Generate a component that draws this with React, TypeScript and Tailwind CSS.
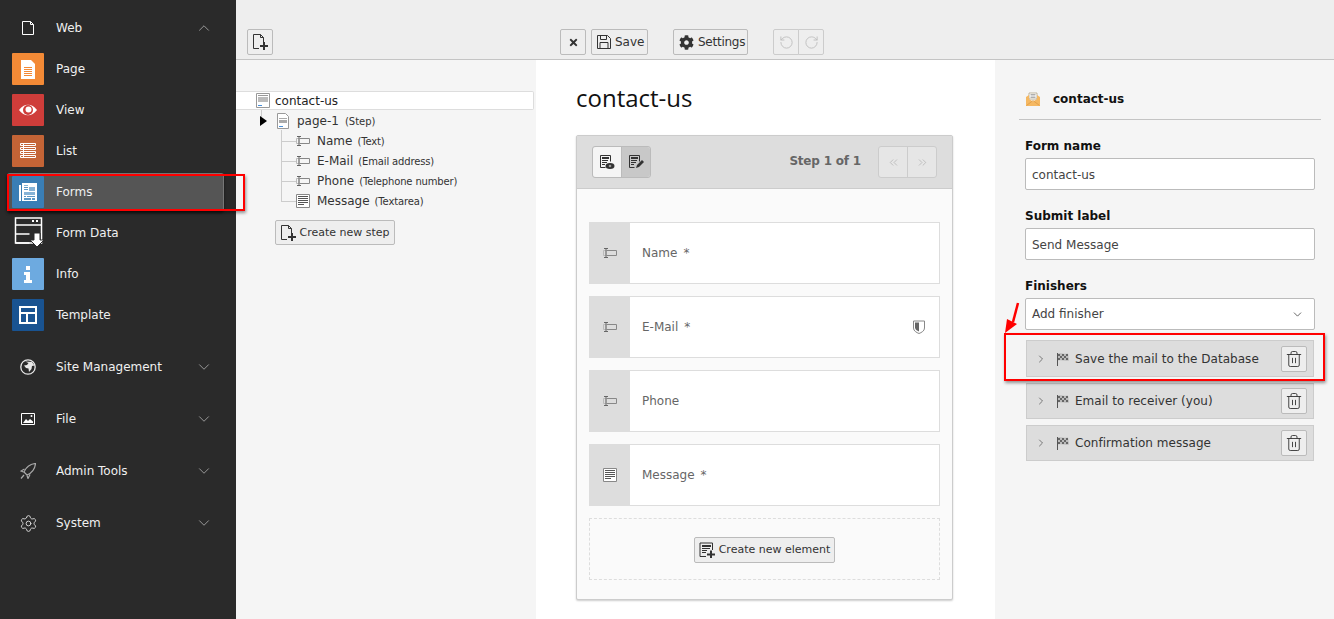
import { ChevronDown, ChevronRight, ChevronUp, ChevronsLeft, ChevronsRight, RotateCcw, RotateCw, Settings, Trash2 } from "lucide-react";
import { FaCog, FaTimes } from "react-icons/fa";
import type { ReactNode } from "react";

const verdana = "font-['DejaVu_Sans',sans-serif]";

function PageIcon() {
  return (
    <svg width="16" height="16" viewBox="0 0 16 16">
      <path d="M2.5 1.5h8l3 3v10h-11z" fill="none" stroke="#fff" />
      <path d="M10.5 1.5v3h3" fill="none" stroke="#fff" />
    </svg>
  );
}

function ModuleIcon({ name }: { name: string }) {
  if (name === "page") {
    return (
      <svg width="32" height="32" viewBox="0 0 32 32">
        <rect width="32" height="32" rx="1" fill="#f38a36" />
        <path d="M9 7h10l4 4v15H9z" fill="#fff" />
        <path d="M12 14.5h8M12 16.5h8M12 18.5h8M12 20.5h8M12 22.5h8" stroke="#f38a36" />
      </svg>
    );
  }
  if (name === "view") {
    return (
      <svg width="32" height="32" viewBox="0 0 32 32">
        <rect width="32" height="32" rx="1" fill="#cf3d3a" />
        <path d="M7 16c5-7 13-7 18 0-5 7-13 7-18 0z" fill="#fff" />
        <circle cx="16" cy="16" r="5" fill="#cf3d3a" />
        <circle cx="16.5" cy="15.5" r="3" fill="#fff" />
      </svg>
    );
  }
  if (name === "list") {
    return (
      <svg width="32" height="32" viewBox="0 0 32 32">
        <rect width="32" height="32" rx="1" fill="#c46436" />
        <path d="M8.5 8.5h15v2h-15zM8.5 12.5h15v2h-15zM8.5 16.5h15v2h-15zM8.5 20.5h15v2h-15z" fill="#c46436" stroke="#fff" />
        <path d="M11.5 9v13" stroke="#fff" />
      </svg>
    );
  }
  if (name === "forms") {
    return (
      <svg width="32" height="32" viewBox="0 0 32 32">
        <rect width="32" height="32" rx="1" fill="#3a7eb5" />
        <path d="M7 9h2v16H7z" fill="#fff" />
        <path d="M10 7h15v18H10z" fill="#fff" />
        <path d="M12 9h4v1h-4zM17 11h6v4h-6zM12 16h11v3H12z" fill="#86b3d6" />
        <path d="M12 11h4v1h-4zM12 13h4v1h-4zM12 20h2v1h-2zM15 20h8v1h-8zM12 22h7v2h-7zM20 22h3v2h-3z" fill="#5b97c4" />
      </svg>
    );
  }
  if (name === "formdata") {
    return (
      <svg width="32" height="32" viewBox="0 0 32 32">
        <path d="M3.5 1h26v25h-26z" fill="none" stroke="#fff" strokeWidth="1.5" />
        <path d="M3.5 8h26M3.5 17h14M3.5 26h14" stroke="#fff" strokeWidth="1.5" />
        <path d="M24 3h2v2h-2zM20 3h2v2h-2z" fill="#fff" />
        <path d="M22 16h6v7h4l-7 7-7-7h4z" fill="#fff" stroke="#2a2a2a" />
      </svg>
    );
  }
  if (name === "info") {
    return (
      <svg width="32" height="32" viewBox="0 0 32 32">
        <rect width="32" height="32" rx="1" fill="#6daae0" />
        <path d="M14 8h4v4h-4zM12 14h6v8h2v3h-8v-3h2v-5h-2z" fill="#fff" />
      </svg>
    );
  }
  return (
    <svg width="32" height="32" viewBox="0 0 32 32">
      <rect width="32" height="32" rx="1" fill="#195391" />
      <path d="M7 7h18v18H7z" fill="#fff" />
      <path d="M9 9h14v4H9zM9 15h5v8H9zM16 15h7v8h-7z" fill="#195391" />
    </svg>
  );
}

function GroupIcon({ name }: { name: string }) {
  if (name === "site") {
    return (
      <svg width="16" height="16" viewBox="0 0 16 16">
        <circle cx="8" cy="8" r="7.2" fill="none" stroke="#e8e8e8" strokeWidth="1.3" />
        <path d="M5 2.5 8.5 4 7 6 4 6.5 6 9l2.5.5L9 13l2.5-3 .5-3 2.5-.5L12 3z" fill="#e8e8e8" />
      </svg>
    );
  }
  if (name === "file") {
    return (
      <svg width="16" height="16" viewBox="0 0 16 16">
        <path d="M1.5 2.5h13v11h-13z" fill="none" stroke="#fff" />
        <path d="M3 12l3-4 2 2 2-2 3 2.5V12z" fill="#fff" />
        <circle cx="11.5" cy="5" r="1" fill="#fff" />
      </svg>
    );
  }
  if (name === "admin") {
    return (
      <svg width="16" height="16" viewBox="0 0 16 16">
        <path d="M15.5.5C10 1 6 4.5 4 9l3 3c4.5-2 8-6 8.5-11.5zM4.5 6 1 8l2.5 1M10 11.5 8 15.5l-1-3M4 12l-3 3.5" fill="none" stroke="#a9a9a9" strokeWidth="1.2" />
      </svg>
    );
  }
  return <Settings size={19} strokeWidth={1.1} color="#e4e4e4" className="shrink-0" />;
}

function DocIcon() {
  return (
    <svg width="14" height="15" viewBox="0 0 14 15">
      <path d="M.5.5h13v14H.5z" fill="#fff" stroke="#999" />
      <path d="M2 2h10v1H2z" fill="#999" />
      <path d="M2 4h10v5H2z" fill="#bbb" />
      <path d="M2 12h4v1H2z" fill="#4a90d9" />
    </svg>
  );
}

function StepIcon() {
  return (
    <svg width="12" height="16" viewBox="0 0 12 16">
      <path d="M.5.5h8l3 3v12H.5z" fill="#fff" stroke="#999" />
      <path d="M2 5h8v1H2zM2 7h8v3H2z" fill="#aaa" />
      <path d="M2 13h4v1H2z" fill="#4a90d9" />
    </svg>
  );
}

function TextFieldIcon() {
  return (
    <svg width="14" height="10" viewBox="0 0 14 10">
      <path d="M3.5 2.5h10v5h-10" fill="none" stroke="#888" />
      <path d="M.5 2.5H3v5H.5z" fill="none" stroke="#bbb" />
      <path d="M1 .5h4M3 .5v9M1 9.5h4" fill="none" stroke="#666" />
    </svg>
  );
}

function TextAreaIcon() {
  return (
    <svg width="14" height="14" viewBox="0 0 14 14">
      <path d="M.5.5h13v13H.5z" fill="#fff" stroke="#888" />
      <path d="M2 2.5h10M2 4.5h10M2 6.5h10M2 8.5h10M2 10.5h6" stroke="#555" />
    </svg>
  );
}

function NewPageIcon() {
  return (
    <svg width="16" height="16" viewBox="0 0 16 16">
      <path d="M7 14.5H1.500V.5h7l3 3V8" fill="none" stroke="#333" />
      <path d="M8.5.5v3h3" fill="none" stroke="#333" />
      <path d="M11 8h2v3h3v2h-3v3h-2v-3H8v-2h3z" fill="#333" />
    </svg>
  );
}

function SaveIcon() {
  return (
    <svg width="14" height="14" viewBox="0 0 14 14">
      <path d="M.5.5h10l3 3v10H.5z" fill="none" stroke="#333" />
      <path d="M3.5.5v4h6v-4M3 13.5v-6h8v6" fill="none" stroke="#333" />
    </svg>
  );
}

function FormViewIcon({ edit }: { edit: boolean }) {
  return (
    <svg width="16" height="16" viewBox="0 0 16 16">
      <path d="M1.5 1.5h10v6M1.5 1.5v12h5" fill="none" stroke="#333" />
      <path d="M3 3h7v2H3z" fill="#333" />
      <path d="M3 6.5h6M3 8.5h5M3 10.5h3" stroke="#333" />
      {edit ? (
        <path d="M8 14l1-3 5-5 2 2-5 5z" fill="#333" />
      ) : (
        <>
          <ellipse cx="11" cy="12" rx="4.5" ry="3" fill="#333" />
          <circle cx="11" cy="12" r="1.3" fill="#999" />
        </>
      )}
    </svg>
  );
}

function NewElementIcon() {
  return (
    <svg width="16" height="16" viewBox="0 0 16 16">
      <path d="M7 14.5H1V1h12.5v7" fill="none" stroke="#333" />
      <path d="M3 3h9v2H3z" fill="#333" />
      <path d="M3 6.5h8M3 8.5h5M3 10.5h4" stroke="#333" />
      <path d="M11 8.5h2v3h3v2h-3V16h-2v-2.5H8v-2h3z" fill="#333" />
    </svg>
  );
}

function FlagIcon() {
  return (
    <svg width="14" height="14" viewBox="0 0 14 14">
      <path d="M1.5 1v13" stroke="#555" />
      <path d="M2 1.500c3-1 5 1 10 0l1 7c-4 1-7-1-11 0z" fill="#bbb" />
      <path d="M2 2h2v2H2zM6 2h2v2H6zM10 2h2v2h-2zM4 4h2v2H4zM8 4h2v2H8zM2 6h2v2H2zM6 6h2v2H6zM10 6h2v2h-2z" fill="#666" />
    </svg>
  );
}

function MailIcon() {
  return (
    <svg width="14" height="14" viewBox="0 0 14 14">
      <path d="M3 1h8v6H3z" fill="#fff" stroke="#a89878" strokeWidth=".7" />
      <path d="M4.5 2.5h5M4.5 4h5M4.5 5.5h5" stroke="#999" strokeWidth=".8" />
      <path d="M0 5l3-2v4l4 2.5L11 7V3l3 2v9H0z" fill="#f5b862" />
      <path d="M.5 13.5 7 8.5l6.5 5" fill="none" stroke="#dd9a42" strokeWidth=".8" />
    </svg>
  );
}

function ShieldIcon() {
  return (
    <svg width="12" height="14" viewBox="0 0 12 14">
      <path d="M.5 1h11v7c0 3-3 4.500-5.500 5.500C3.500 12.500.5 11 .5 8z" fill="#fff" stroke="#888" />
      <path d="M2 2.5h4v9C4 10.5 2 9.500 2 7.500z" fill="#666" />
    </svg>
  );
}

function ToolButton({ children, className = "" }: { children: ReactNode; className?: string }) {
  return (
    <button className={`flex h-[26px] items-center justify-center rounded-[2px] border border-[#bbb] bg-[#eee] text-[12px] text-[#333] ${className}`}>
      {children}
    </button>
  );
}

function MenuModule({ name, label, active = false }: { name: string; label: string; active?: boolean }) {
  return (
    <div className="relative flex h-[32px] items-center">
      {active && <div className="absolute left-[7px] top-[-3px] h-[38px] w-[217px] rounded-[3px] border-x border-t border-[#777] bg-[#555] shadow-[0_2px_3px_rgba(0,0,0,0.5)]" />}
      <div className="relative ml-[12px] h-[32px] w-[32px]">
        <ModuleIcon name={name} />
      </div>
      <span className="relative ml-[12px] text-[12px] text-[#f0f0f0]">{label}</span>
    </div>
  );
}

function MenuGroup({ name, label }: { name: string; label: string }) {
  return (
    <div className="flex h-[52px] items-center">
      <div className="ml-[20px] flex w-[16px] justify-center">
        <GroupIcon name={name} />
      </div>
      <span className="ml-[20px] flex-1 text-[12px] text-[#f0f0f0]">{label}</span>
      <ChevronDown size={18} strokeWidth={1} color="#bbb" className="mr-[23px]" />
    </div>
  );
}

function Sidebar() {
  return (
    <aside className="flex w-[236px] shrink-0 flex-col bg-[#2a2a2a]">
      <div className="flex h-[53px] items-center pt-[3px]">
        <div className="ml-[20px]">
          <PageIcon />
        </div>
        <span className="ml-[20px] flex-1 text-[12px] text-[#f0f0f0]">Web</span>
        <ChevronUp size={18} strokeWidth={1} color="#bbb" className="mr-[23px]" />
      </div>
      <div className="flex flex-col gap-[9px]">
        <MenuModule name="page" label="Page" />
        <MenuModule name="view" label="View" />
        <MenuModule name="list" label="List" />
        <MenuModule name="forms" label="Forms" active />
        <MenuModule name="formdata" label="Form Data" />
        <MenuModule name="info" label="Info" />
        <MenuModule name="template" label="Template" />
      </div>
      <div className="mt-[10px]">
        <MenuGroup name="site" label="Site Management" />
        <MenuGroup name="file" label="File" />
        <MenuGroup name="admin" label="Admin Tools" />
        <MenuGroup name="system" label="System" />
      </div>
    </aside>
  );
}

function Toolbar() {
  return (
    <div className="flex h-[60px] items-start border-b border-[#c4c4c4] bg-[#eee] pt-[29px]">
      <ToolButton className="ml-[11px] w-[26px]">
        <NewPageIcon />
      </ToolButton>
      <ToolButton className="ml-[287px] w-[26px]">
        <FaTimes size={11} />
      </ToolButton>
      <ToolButton className="ml-[5px] w-[57px] !justify-start gap-[4px] pl-[5px] text-[11px]">
        <SaveIcon />
        Save
      </ToolButton>
      <ToolButton className="ml-[25px] w-[75px] !justify-start gap-[4px] pl-[5px] text-[11px] tracking-[-0.25px]">
        <FaCog size={15} />
        Settings
      </ToolButton>
      <div className="ml-[25px] flex">
        <ToolButton className="w-[26px] rounded-r-none border-[#ccc]">
          <RotateCcw size={15} strokeWidth={1.4} color="#bbb" />
        </ToolButton>
        <ToolButton className="ml-[-1px] w-[26px] rounded-l-none border-[#ccc]">
          <RotateCw size={15} strokeWidth={1.4} color="#bbb" />
        </ToolButton>
      </div>
    </div>
  );
}

function TreeField({ icon, label, type }: { icon: ReactNode; label: string; type: string }) {
  return (
    <div className="relative flex h-[20px] items-center pl-[60px]">
      <div className="absolute left-[45px] top-[10px] h-px w-[15px] bg-[#ccc]" />
      <div className="relative flex w-[21px]">{icon}</div>
      <span className="text-[12px] text-[#333]">{label}</span>
      <span className="ml-[5px] text-[10px] tracking-[-0.15px] text-[#333]">({type})</span>
    </div>
  );
}

function TreePanel() {
  return (
    <section className="w-[300px] shrink-0 bg-[#f5f5f5] pt-[31px]">
      <div className="flex h-[19px] w-[298px] items-center rounded-r-[2px] border border-l-0 border-[#ddd] bg-white pl-[20px]">
        <DocIcon />
        <span className="ml-[5px] text-[12px] text-[#222]">contact-us</span>
      </div>
      <div className="relative">
        <div className="absolute left-[25px] top-0 h-[12px] w-px bg-[#ccc]" />
        <div className="absolute left-[45px] top-[20px] h-[72px] w-px bg-[#ccc]" />
        <div className="relative flex h-[22px] items-center pl-[24px]">
          <span className="h-0 w-0 border-y-[5px] border-l-[7px] border-y-transparent border-l-black" />
          <div className="ml-[10px] flex w-[20px]">
            <StepIcon />
          </div>
          <span className="text-[12px] text-[#333]">page-1</span>
          <span className="ml-[6px] text-[10px] text-[#333]">(Step)</span>
        </div>
        <div className="-mt-[1px]">
          <TreeField icon={<TextFieldIcon />} label="Name" type="Text" />
          <TreeField icon={<TextFieldIcon />} label="E-Mail" type="Email address" />
          <TreeField icon={<TextFieldIcon />} label="Phone" type="Telephone number" />
          <TreeField icon={<TextAreaIcon />} label="Message" type="Textarea" />
        </div>
      </div>
      <button className="ml-[39px] mt-[9px] flex h-[25px] w-[120px] items-center justify-center gap-[3px] rounded-[2px] border border-[#bbb] bg-[#eee] text-[11px] text-[#333]">
        <NewPageIcon />
        <span className="mt-[1px]">Create new step</span>
      </button>
    </section>
  );
}

function FormRow({ icon, label, required = false, shield = false }: { icon: ReactNode; label: string; required?: boolean; shield?: boolean }) {
  return (
    <div className="flex h-[62px] border border-[#ddd] bg-white">
      <div className="flex w-[40px] shrink-0 items-center justify-center bg-[#ddd]">{icon}</div>
      <div className="flex flex-1 items-center justify-between pl-[12px] pr-[14px]">
        <span className="text-[12px] text-[#666]">
          {label}
          {required && <span className="ml-[6px]">*</span>}
        </span>
        {shield && <ShieldIcon />}
      </div>
    </div>
  );
}

function Stage() {
  return (
    <section className="w-[459px] shrink-0 bg-white px-[40px]">
      <h1 className="mt-[21px] h-[34px] font-['Open_Sans',sans-serif] text-[24px] leading-[34px] text-[#111]">contact-us</h1>
      <div className="mt-[20px] h-[465px] w-[377px] rounded-[2px] border border-[#ccc] bg-[#fafafa] shadow-[0_1px_2px_rgba(0,0,0,0.2)]">
        <div className="flex h-[53px] items-center border-b border-[#ccc] bg-[#ddd] px-[15px]">
          <div className="flex h-[32px] rounded-[3px] border border-[#bbb]">
            <div className="flex w-[28px] items-center justify-center rounded-l-[3px] bg-[#f5f5f5]">
              <FormViewIcon edit={false} />
            </div>
            <div className="flex w-[29px] items-center justify-center rounded-r-[3px] border-l border-[#bbb] bg-[#c8c8c8]">
              <FormViewIcon edit />
            </div>
          </div>
          <span className="ml-auto mr-[17px] mb-[3px] text-[12px] font-bold tracking-[-0.2px] text-[#666]">Step 1 of 1</span>
          <div className="flex h-[32px] rounded-[3px] border border-[#ccc] bg-[#e6e6e6]">
            <div className="flex w-[28px] items-center justify-center">
              <ChevronsLeft size={13} strokeWidth={1.2} color="#aaa" />
            </div>
            <div className="flex w-[29px] items-center justify-center border-l border-[#ccc]">
              <ChevronsRight size={13} strokeWidth={1.2} color="#aaa" />
            </div>
          </div>
        </div>
        <div className="flex flex-col gap-[12px] px-[12px] pt-[33px]">
          <FormRow icon={<TextFieldIcon />} label="Name" required />
          <FormRow icon={<TextFieldIcon />} label="E-Mail" required shield />
          <FormRow icon={<TextFieldIcon />} label="Phone" />
          <FormRow icon={<TextAreaIcon />} label="Message" required />
          <div className="flex h-[62px] items-center justify-center border border-dashed border-[#ddd] pt-[1px]">
            <button className="flex h-[26px] w-[141px] items-center justify-center gap-[4px] rounded-[2px] border border-[#bbb] bg-[#eee] text-[11px] text-[#333]">
              <NewElementIcon />
              <span className="mt-[2px]">Create new element</span>
            </button>
          </div>
        </div>
      </div>
    </section>
  );
}

function Field({ label, value }: { label: string; value: string }) {
  return (
    <div className="mb-[19px]">
      <div className="mb-[4px] h-[15px] text-[12px] font-bold leading-[15px] text-[#111]">{label}</div>
      <div className="flex h-[32px] items-center rounded-[2px] border border-[#bbb] bg-white pl-[6px] pt-[1px] text-[12px] text-[#444]">{value}</div>
    </div>
  );
}

function Finisher({ label, className = "" }: { label: string; className?: string }) {
  return (
    <div className={`flex items-center border border-[#ccc] bg-[#ddd] pl-[8px] pr-[6px] ${className}`}>
      <ChevronRight size={12} strokeWidth={1.5} color="#555" />
      <div className="ml-[9px] flex w-[19px]">
        <FlagIcon />
      </div>
      <span className="flex-1 text-[12px] tracking-[0.03px] text-[#333]">{label}</span>
      <button className="flex h-[26px] w-[26px] items-center justify-center rounded-[2px] border border-[#bbb] bg-[#eee]">
        <Trash2 size={18} strokeWidth={1.2} color="#333" />
      </button>
    </div>
  );
}

function Inspector() {
  return (
    <section className="flex-1 bg-[#f5f5f5]">
      <div className="ml-[24px] mr-[13px] h-[60px] border-b border-[#c4c4c4] pl-[7px] pt-[30px]">
        <div className="flex items-center">
          <MailIcon />
          <span className="ml-[13px] text-[12px] font-bold text-[#111]">contact-us</span>
        </div>
      </div>
      <div className="ml-[30px] mr-[19px] mt-[19px]">
        <Field label="Form name" value="contact-us" />
        <Field label="Submit label" value="Send Message" />
        <div className="mb-[4px] h-[15px] text-[12px] font-bold leading-[15px] text-[#111]">Finishers</div>
        <div className="flex h-[32px] items-center justify-between rounded-[2px] border border-[#bbb] bg-white pl-[6px] pr-[10px] text-[12px] text-[#444]">
          Add finisher
          <ChevronDown size={13} strokeWidth={1.5} color="#444" />
        </div>
        <div className="mx-[1px] mt-[10px] flex flex-col gap-[6px]">
          <Finisher label="Save the mail to the Database" className="h-[37px]" />
          <Finisher label="Email to receiver (you)" className="h-[36px]" />
          <Finisher label="Confirmation message" className="h-[36px]" />
        </div>
      </div>
    </section>
  );
}

export default function App() {
  return (
    <div className={`relative flex h-[619px] w-[1334px] overflow-hidden bg-white ${verdana}`}>
      <Sidebar />
      <div className="flex flex-1 flex-col">
        <Toolbar />
        <div className="flex flex-1">
          <TreePanel />
          <Stage />
          <Inspector />
        </div>
      </div>

      {/* annotation boxes drawn on top of the screenshot */}
      <div className="absolute left-[7px] top-[174px] h-[37px] w-[238px] border-[2px] border-[#f00] shadow-[1px_2px_3px_rgba(0,0,0,0.4)]" />
      <div className="absolute left-[1004px] top-[333px] h-[48px] w-[321px] border-[2px] border-[#f00] shadow-[1px_2px_3px_rgba(0,0,0,0.4)]" />
      <svg className="absolute left-[1003px] top-[300px]" width="18" height="36" viewBox="0 0 18 36">
        <path d="M15 3 10 22" stroke="#f00" strokeWidth="2.5" />
        <path d="M2 33 4 19l10 5z" fill="#f00" />
      </svg>
    </div>
  );
}
